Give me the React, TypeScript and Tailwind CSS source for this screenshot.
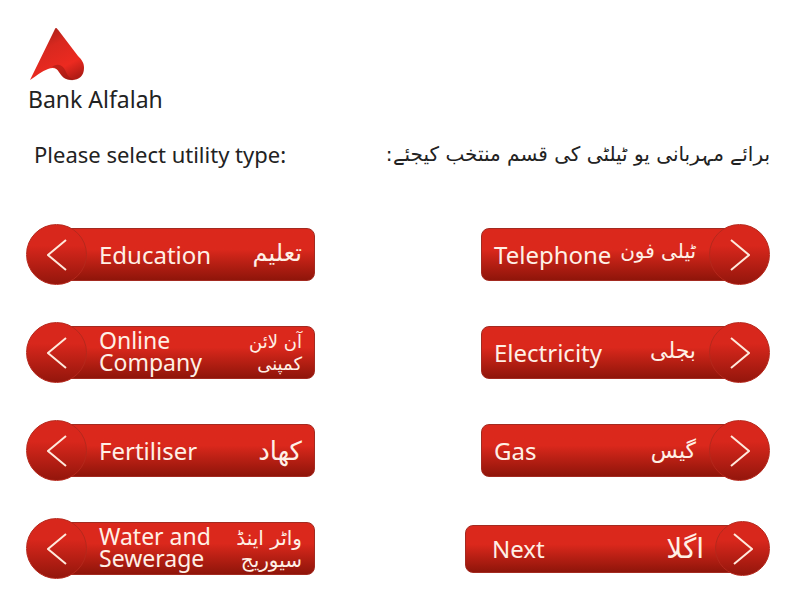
type Side = 'left' | 'right';

interface Option {
  side: Side;
  label: string;
  urdu: string;
  urduSize: string;
  compact?: boolean;
}

const options: Option[] = [
  { side: 'left', label: 'Education', urdu: 'تعلیم', urduSize: 'text-2xl pb-1' },
  { side: 'right', label: 'Telephone', urdu: 'ٹیلی فون', urduSize: 'text-xl pb-2' },
  { side: 'left', label: 'Online\nCompany', urdu: 'آن لائن\nکمپنی', urduSize: 'text-lg' },
  { side: 'right', label: 'Electricity', urdu: 'بجلی', urduSize: 'text-[22px] pb-1' },
  { side: 'left', label: 'Fertiliser', urdu: 'کھاد', urduSize: 'text-[26px]' },
  { side: 'right', label: 'Gas', urdu: 'گیس', urduSize: 'text-[22px]' },
  { side: 'left', label: 'Water and\nSewerage', urdu: 'واٹر اینڈ\nسیوریج', urduSize: 'text-xl' },
  { side: 'right', label: 'Next', urdu: 'اگلا', urduSize: 'text-[28px]', compact: true },
];

function Arrow({ side, compact }: { side: Side; compact?: boolean }) {
  return (
    <span
      className={`z-10 flex shrink-0 items-center justify-center rounded-full border border-[#b5281c] bg-linear-to-b from-[#d8271c] from-35% to-[#94160c] ${
        compact ? 'size-[55px]' : 'size-[61px]'
      } ${side === 'left' ? '-mr-[30px]' : '-ml-[30px]'}`}
    >
      <svg viewBox="0 0 20 32" className="h-8 w-5" fill="none" stroke="#ffe9dc" strokeWidth="2" aria-hidden="true">
        <path d={side === 'left' ? 'M19 1 L1 16 L19 31' : 'M1 1 L19 16 L1 31'} />
      </svg>
    </span>
  );
}

function OptionButton({ side, label, urdu, urduSize, compact }: Option) {
  const twoLines = label.includes('\n');
  const padding =
    side === 'left' ? 'rounded-r-lg pr-3 pl-[41px]' : compact ? 'rounded-l-lg pr-10 pl-[26px]' : 'rounded-l-lg pr-[42px] pl-3';
  return (
    <button
      type="button"
      className={`flex cursor-pointer items-center text-[#fff0e6] ${
        side === 'left' ? 'w-[289px]' : compact ? 'w-[305px] justify-self-end' : 'w-[289px] justify-self-end'
      }`}
    >
      {side === 'left' && <Arrow side={side} compact={compact} />}
      <span
        className={`flex min-w-0 flex-1 items-center justify-between border border-[#a32a20] bg-linear-to-b from-[#db281c] from-40% to-[#8f150a] ${
          compact ? 'h-12' : 'h-[53px]'
        } ${padding}`}
      >
        <span className={`text-left whitespace-pre leading-[22px] ${twoLines ? 'pb-1 text-[23px]' : 'text-2xl'}`}>{label}</span>
        <span lang="ur" dir="rtl" className={`text-right whitespace-pre font-['DejaVu_Sans',sans-serif] leading-[22px] ${urduSize}`}>
          {urdu}
        </span>
      </span>
      {side === 'right' && <Arrow side={side} compact={compact} />}
    </button>
  );
}

export default function App() {
  return (
    <main className="min-h-screen bg-white pr-[30px] pl-[26px] pt-[26px] pb-5 font-['Noto_Sans',sans-serif] text-[#222222]">
      <header className="pl-[2px]">
        <svg viewBox="0 0 56 56" className="size-14" aria-hidden="true">
          <defs>
            <linearGradient id="wing" x1="0.2" y1="0" x2="0.75" y2="1">
              <stop offset="0" stopColor="#9e2018" />
              <stop offset="0.35" stopColor="#d8281f" />
              <stop offset="0.75" stopColor="#ec2a20" />
              <stop offset="1" stopColor="#b31c15" />
            </linearGradient>
          </defs>
          <path
            d="M28 2 C29 2 30 4 31 5 L50 30 C54 34 56 37 56 42 C56 50 51 54 44 54 C36 54 34 50 31 46 C29 42 25 41 20 43 C14 45 8 50 2 54 L26 5 C27 3 27 2 28 2 Z"
            fill="url(#wing)"
          />
          <path d="M24 41 C30 36 36 40 38 46 C40 51 43 53 47 54 C36 55 34 50 31 46 C29 43 27 41 24 41 Z" fill="#8f1710" opacity="0.45" />
        </svg>
        <p className="text-[23px] leading-[34px]">Bank Alfalah</p>
      </header>
      <div className="mt-[18px] flex h-10 items-center justify-between pl-2">
        <h1 className="text-[22px] leading-9">Please select utility type:</h1>
        <p lang="ur" dir="rtl" className="font-['DejaVu_Sans',sans-serif] text-xl">
          برائے مہربانی یو ٹیلٹی کی قسم منتخب کیجئے:
        </p>
      </div>
      <div className="mt-[50px] grid grid-cols-2 items-center gap-y-[37px]">
        {options.map((option) => (
          <OptionButton key={option.label} {...option} />
        ))}
      </div>
    </main>
  );
}
